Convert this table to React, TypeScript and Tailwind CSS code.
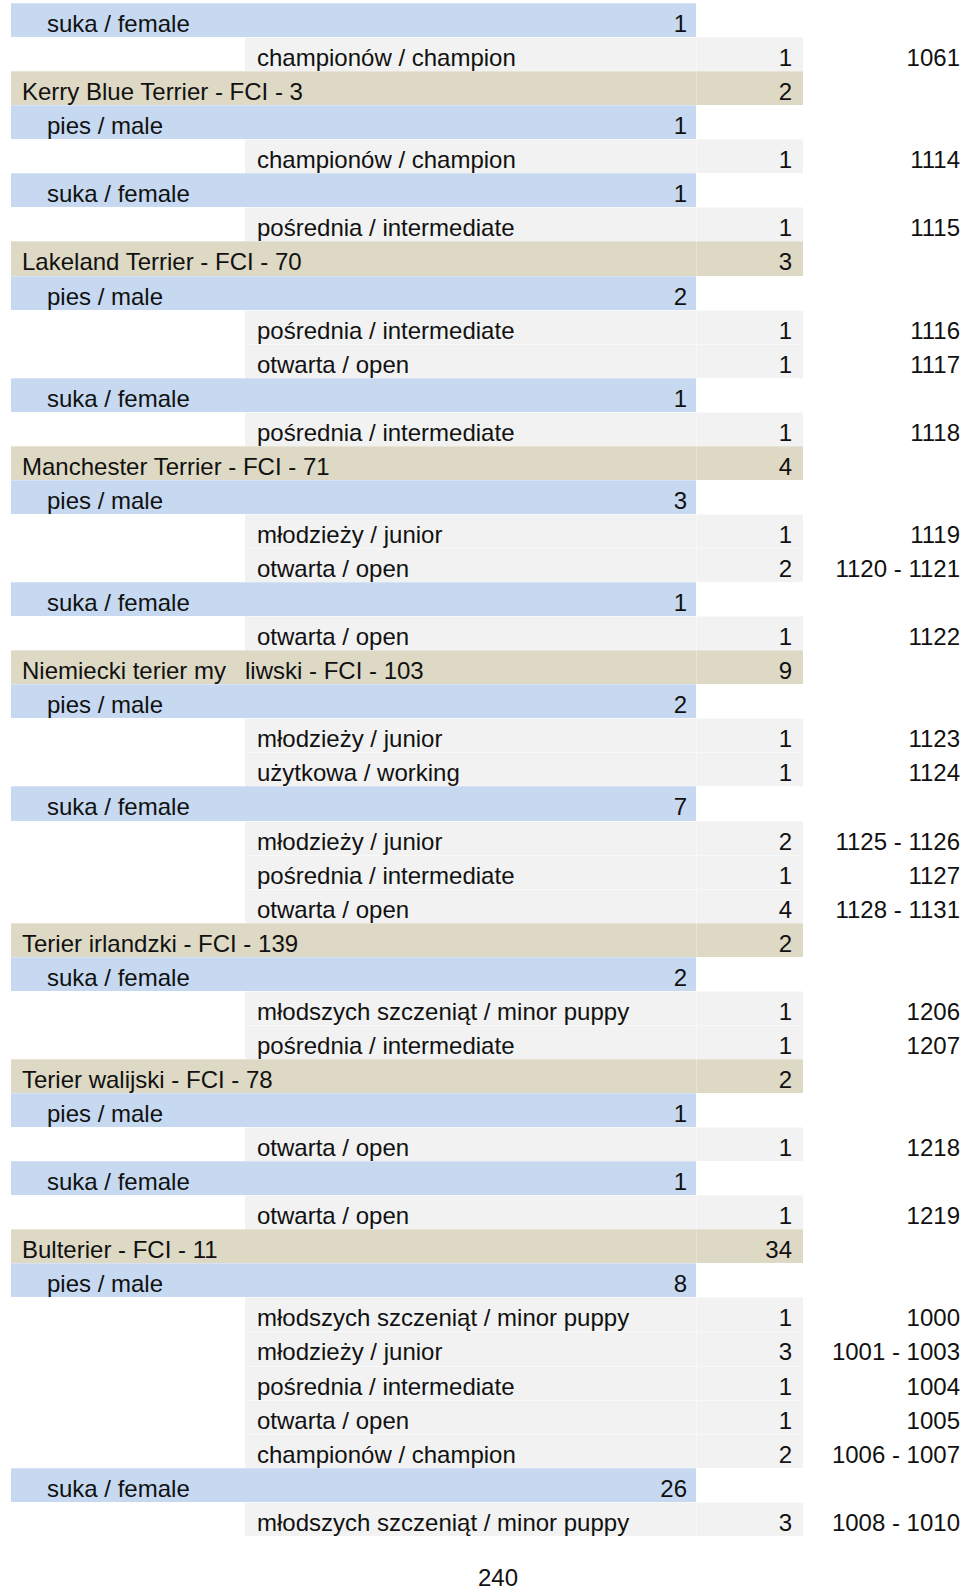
import React from "react";

type Row =
  | { t: "b"; label: React.ReactNode; count: string }
  | { t: "s"; label: string; count: string }
  | { t: "c"; label: string; count: string; id: string };

const PM = "pies / male";
const SF = "suka / female";
const CH = "championów / champion";
const IN = "pośrednia / intermediate";
const OP = "otwarta / open";
const JU = "młodzieży / junior";
const MP = "młodszych szczeniąt / minor puppy";

const rows: Row[] = [
  { t: "s", label: SF, count: "1" },
  { t: "c", label: CH, count: "1", id: "1061" },
  { t: "b", label: "Kerry Blue Terrier - FCI - 3", count: "2" },
  { t: "s", label: PM, count: "1" },
  { t: "c", label: CH, count: "1", id: "1114" },
  { t: "s", label: SF, count: "1" },
  { t: "c", label: IN, count: "1", id: "1115" },
  { t: "b", label: "Lakeland Terrier - FCI - 70", count: "3" },
  { t: "s", label: PM, count: "2" },
  { t: "c", label: IN, count: "1", id: "1116" },
  { t: "c", label: OP, count: "1", id: "1117" },
  { t: "s", label: SF, count: "1" },
  { t: "c", label: IN, count: "1", id: "1118" },
  { t: "b", label: "Manchester Terrier - FCI - 71", count: "4" },
  { t: "s", label: PM, count: "3" },
  { t: "c", label: JU, count: "1", id: "1119" },
  { t: "c", label: OP, count: "2", id: "1120 - 1121" },
  { t: "s", label: SF, count: "1" },
  { t: "c", label: OP, count: "1", id: "1122" },
  {
    t: "b",
    label: (
      <>
        <span className="inline-block w-[223px]">Niemiecki terier my</span>
        <span>liwski - FCI - 103</span>
      </>
    ),
    count: "9",
  },
  { t: "s", label: PM, count: "2" },
  { t: "c", label: JU, count: "1", id: "1123" },
  { t: "c", label: "użytkowa / working", count: "1", id: "1124" },
  { t: "s", label: SF, count: "7" },
  { t: "c", label: JU, count: "2", id: "1125 - 1126" },
  { t: "c", label: IN, count: "1", id: "1127" },
  { t: "c", label: OP, count: "4", id: "1128 - 1131" },
  { t: "b", label: "Terier irlandzki - FCI - 139", count: "2" },
  { t: "s", label: SF, count: "2" },
  { t: "c", label: MP, count: "1", id: "1206" },
  { t: "c", label: IN, count: "1", id: "1207" },
  { t: "b", label: "Terier walijski - FCI - 78", count: "2" },
  { t: "s", label: PM, count: "1" },
  { t: "c", label: OP, count: "1", id: "1218" },
  { t: "s", label: SF, count: "1" },
  { t: "c", label: OP, count: "1", id: "1219" },
  { t: "b", label: "Bulterier - FCI - 11", count: "34" },
  { t: "s", label: PM, count: "8" },
  { t: "c", label: MP, count: "1", id: "1000" },
  { t: "c", label: JU, count: "3", id: "1001 - 1003" },
  { t: "c", label: IN, count: "1", id: "1004" },
  { t: "c", label: OP, count: "1", id: "1005" },
  { t: "c", label: CH, count: "2", id: "1006 - 1007" },
  { t: "s", label: SF, count: "26" },
  { t: "c", label: MP, count: "3", id: "1008 - 1010" },
];

function RowView({ r }: { r: Row }) {
  if (r.t === "b") {
    return (
      <div className="flex h-[34.07px]">
        <div className="ml-[11px] w-[685px] shrink-0 bg-[#ddd9c4] border-t border-[#e8e5d7] pl-[11px] pt-[3px] leading-[30px] whitespace-pre">
          <div className="translate-y-[1.5px]">{r.label}</div>
        </div>
        <div className="w-[107px] shrink-0 bg-[#ddd9c4] border-t border-l border-[#e8e5d7] pr-[11px] pt-[3px] text-right leading-[30px]">
          <div className="translate-y-[1.5px]">{r.count}</div>
        </div>
      </div>
    );
  }
  if (r.t === "s") {
    return (
      <div className="flex h-[34.07px]">
        <div className="ml-[11px] w-[685px] shrink-0 bg-[#c6d9f0] border-t border-[#d6e3f4] pl-[36px] pr-[9px] pt-[3px] flex justify-between leading-[30px]">
          <span className="translate-y-[1.5px]">{r.label}</span>
          <span className="translate-y-[1.5px]">{r.count}</span>
        </div>
      </div>
    );
  }
  return (
    <div className="flex h-[34.07px]">
      <div className="ml-[245px] w-[451px] shrink-0 bg-[#f2f2f2] border-t border-[#f8f8f8] pl-[12px] pt-[3px] leading-[30px]">
        <div className="translate-y-[1.5px]">{r.label}</div>
      </div>
      <div className="w-[107px] shrink-0 bg-[#f2f2f2] border-t border-l border-[#f8f8f8] pr-[11px] pt-[3px] text-right leading-[30px]">
        <div className="translate-y-[1.5px]">{r.count}</div>
      </div>
      <div className="w-[157px] shrink-0 text-right pt-[3px] leading-[30px] border-t border-transparent">
        <div className="translate-y-[1.5px]">{r.id}</div>
      </div>
    </div>
  );
}

export default function App() {
  return (
    <div
      className="w-[960px] h-[1588px] bg-white text-[#111] text-[24px] overflow-hidden"
      style={{ fontFamily: '"Liberation Sans", Arial, sans-serif' }}
    >
      <div className="pt-[3px] flex flex-col">
        {rows.map((r, i) => (
          <RowView key={i} r={r} />
        ))}
      </div>
      <div className="mt-[32px] pl-[478px] leading-[20px]">240</div>
    </div>
  );
}
